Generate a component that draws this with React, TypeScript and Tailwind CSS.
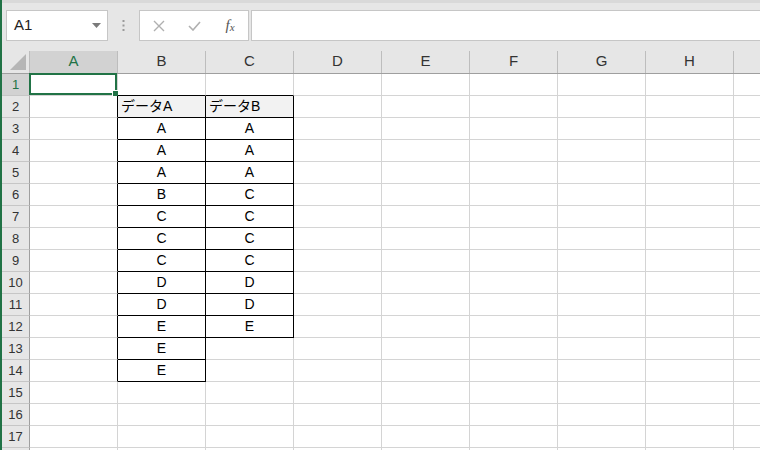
const cols = ['A', 'B', 'C', 'D', 'E', 'F', 'G', 'H', ''];
const rowCount = 18;

// data table: row -> [B, C]
const data: Record<number, [string | null, string | null]> = {
    2: ['データA', 'データB'],
    3: ['A', 'A'],
    4: ['A', 'A'],
    5: ['A', 'A'],
    6: ['B', 'C'],
    7: ['C', 'C'],
    8: ['C', 'C'],
    9: ['C', 'C'],
    10: ['D', 'D'],
    11: ['D', 'D'],
    12: ['E', 'E'],
    13: ['E', null],
    14: ['E', null],
};

const inTable = (r: number, c: number) => {
    const row = data[r];
    if (!row || c < 1 || c > 2) return false;
    return row[c - 1] !== null;
};

function Cell({ r, c }: { r: number; c: number }) {
    const right = inTable(r, c) || inTable(r, c + 1);
    const bottom = inTable(r, c) || inTable(r + 1, c);
    const value = c >= 1 && c <= 2 ? data[r]?.[c - 1] : null;
    const isHead = r === 2 && value;

    return (
        <div
            className={`relative h-[22px] w-[88px] shrink-0 border-r border-b ${right ? 'border-r-black' : 'border-r-[#d4d4d4]'} ${bottom ? 'border-b-black' : 'border-b-[#d4d4d4]'} ${isHead ? 'bg-[#f2f2f2] pl-[3px] text-left' : 'text-center'} text-[14px] leading-[21px] text-black`}
        >
            {value}
            {r === 1 && c === 0 && (
                <div className="absolute -top-[1px] -left-[1px] right-0 bottom-0 border-2 border-[#217346]">
                    <div className="absolute -right-[4px] -bottom-[4px] h-[7px] w-[7px] border border-white bg-[#217346]" />
                </div>
            )}
        </div>
    );
}

export default function App() {
    return (
        <div className="flex h-[450px] w-[760px] flex-col overflow-hidden border-l-2 border-l-[#217346] bg-white font-['Liberation_Sans','Noto_Sans_CJK_JP',sans-serif]">
            {/* Formula bar */}
            <div className="h-[51px] shrink-0 bg-[#e6e6e6]">
                <div className="h-[3px] bg-[#d9d9d9]" />
                <div className="flex items-start pt-[7px]">
                    <div className="ml-[4px] flex h-[31px] w-[102px] items-center justify-between border border-[#c6c6c6] bg-white pr-[6px] pl-[7px]">
                        <span className="text-[15px] text-[#222]">A1</span>
                        <svg width="9" height="5" viewBox="0 0 9 5">
                            <path d="M0 0h9L4.5 5z" fill="#7a7a7a" />
                        </svg>
                    </div>
                    <div className="flex h-[31px] w-[31px] items-center justify-center">
                        <svg width="3" height="11" viewBox="0 0 3 11">
                            <rect x="0.5" y="0" width="2" height="2" fill="#9a9a9a" />
                            <rect x="0.5" y="4.5" width="2" height="2" fill="#9a9a9a" />
                            <rect x="0.5" y="9" width="2" height="2" fill="#9a9a9a" />
                        </svg>
                    </div>
                    <div className="flex h-[31px] w-[110px] items-center border border-[#c6c6c6] bg-white">
                        <div className="flex w-[36px] justify-center pl-[2px]">
                            <svg width="12" height="12" viewBox="0 0 12 12">
                                <path d="M1 1l10 10M11 1L1 11" stroke="#b0b0b0" strokeWidth="1.4" />
                            </svg>
                        </div>
                        <div className="flex w-[36px] justify-center">
                            <svg width="13" height="10" viewBox="0 0 13 10">
                                <path d="M1 5l4 4 7-8" stroke="#b0b0b0" strokeWidth="1.6" fill="none" />
                            </svg>
                        </div>
                        <div className="flex w-[36px] items-baseline justify-center font-['Liberation_Serif',serif] text-[15px] leading-none text-[#555] italic">
                            f<span className="relative top-[1px] text-[11px]">x</span>
                        </div>
                    </div>
                    <div className="ml-[2px] h-[31px] flex-1 border border-r-0 border-[#c6c6c6] bg-white" />
                </div>
            </div>

            {/* Column headers */}
            <div className="flex h-[23px] shrink-0 border-b border-b-[#9f9f9f] bg-[#e6e6e6]">
                <div className="relative w-[28px] shrink-0 border-r border-r-[#bdbdbd]">
                    <svg className="absolute right-[3px] bottom-[3px]" width="16" height="16" viewBox="0 0 16 16">
                        <path d="M16 0V16H0z" fill="#b6b6b6" />
                    </svg>
                </div>
                {cols.map((c, i) => (
                    <div
                        key={i}
                        className={`flex w-[88px] shrink-0 items-end justify-center border-r border-r-[#bdbdbd] pb-[1px] text-[15px] ${i === 0 ? 'bg-[#d2d2d2] text-[#217346]' : 'text-[#333]'}`}
                    >
                        {c}
                    </div>
                ))}
            </div>

            {/* Rows */}
            {Array.from({ length: rowCount }, (_, idx) => idx + 1).map((r) => (
                <div key={r} className="flex shrink-0">
                    <div
                        className={`flex h-[22px] w-[28px] shrink-0 items-center justify-center border-r border-b border-r-[#9f9f9f] border-b-[#c6c6c6] text-[13px] ${r === 1 ? 'bg-[#d2d2d2] text-[#217346]' : 'bg-[#e6e6e6] text-[#333]'}`}
                    >
                        {r < rowCount ? r : ''}
                    </div>
                    {cols.map((c, ci) => (
                        <Cell key={ci} r={r} c={ci} />
                    ))}
                </div>
            ))}
        </div>
    );
}
